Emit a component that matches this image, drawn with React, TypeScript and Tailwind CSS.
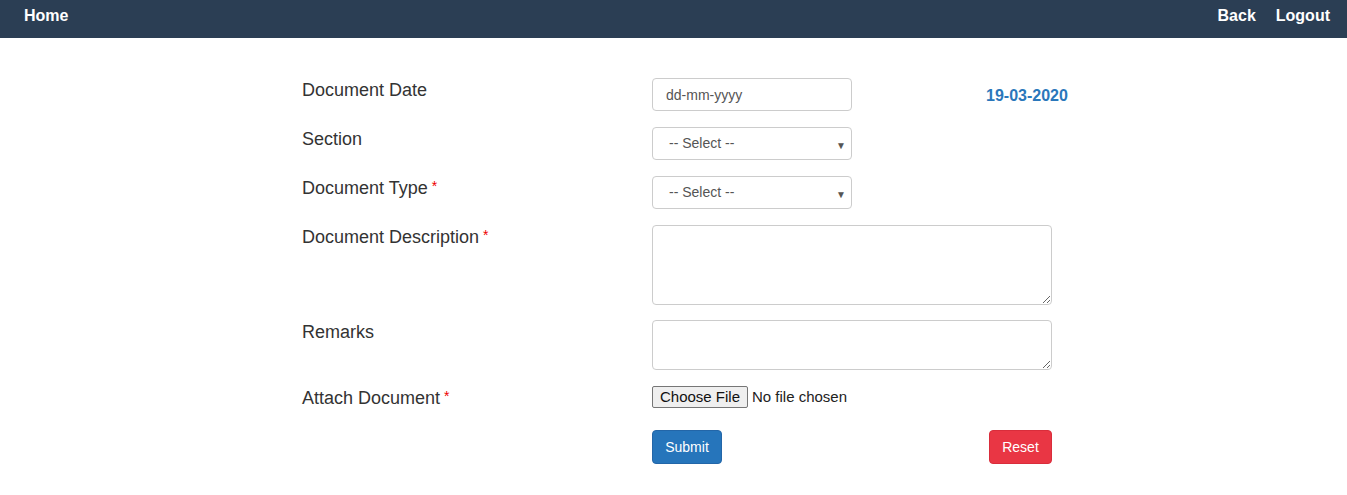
import React from "react";

const font = { fontFamily: '"Liberation Sans", Arial, sans-serif' };

function Label({ text, req }: { text: string; req?: boolean }) {
  return (
    <div className="w-[350px] shrink-0 text-[18px] leading-[20px] text-[#333] pt-[2px]">
      {text}
      {req && <span className="text-[#e00] text-[14px] align-top ml-[4px] relative top-[-2px]">*</span>}
    </div>
  );
}

function Select() {
  return (
    <div className="relative w-[200px] h-[33px] border border-[#ccc] rounded-[4px] bg-white flex items-center pl-[16px] text-[14px] text-[#555]">
      -- Select --
      <span className="absolute right-[5px] top-[10px] text-[10px] text-[#555]">▼</span>
    </div>
  );
}

export default function App() {
  return (
    <div className="min-h-[495px] bg-white" style={font}>
      <div className="h-[38px] bg-[#2b3e54] flex items-start justify-between px-[24px] pt-[7px] text-white font-bold text-[16px] leading-[18px]">
        <span>Home</span>
        <div className="flex gap-[20px] mr-[-7px]">
          <span>Back</span>
          <span>Logout</span>
        </div>
      </div>
      <div className="ml-[302px] pt-[40px] flex flex-col">
        <div className="flex items-start h-[32px]">
          <Label text="Document Date" />
          <input
            className="w-[200px] h-[33px] border border-[#ccc] rounded-[4px] px-[13px] text-[14px] text-[#555] placeholder:text-[#555] outline-none"
            placeholder="dd-mm-yyyy"
          />
          <div className="ml-[134px] pt-[6px] text-[16px] font-bold text-[#2a77bb]">19-03-2020</div>
        </div>
        <div className="flex items-start mt-[17px]">
          <Label text="Section" />
          <Select />
        </div>
        <div className="flex items-start mt-[16px]">
          <Label text="Document Type" req />
          <Select />
        </div>
        <div className="flex items-start mt-[16px]">
          <Label text="Document Description" req />
          <textarea className="w-[400px] h-[80px] border border-[#ccc] rounded-[4px] block" />
        </div>
        <div className="flex items-start mt-[15px]">
          <Label text="Remarks" />
          <textarea className="w-[400px] h-[50px] border border-[#ccc] rounded-[4px] block" />
        </div>
        <div className="flex items-start mt-[16px]">
          <Label text="Attach Document" req />
          <div className="flex items-center text-[15px] text-[#222]">
            <span className="h-[22px] w-[96px] flex items-center justify-center border border-[#767676] rounded-[2px] bg-[#efefef] text-[#111]">Choose File</span>
            <span className="ml-[4px]">No file chosen</span>
          </div>
        </div>
        <div className="flex items-start mt-[21px]">
          <div className="w-[350px] shrink-0" />
          <div className="w-[400px] flex justify-between">
            <button className="w-[70px] h-[34px] pt-[1px] rounded-[4px] bg-[#2675bb] border border-[#2366a8] text-white text-[14px]">Submit</button>
            <button className="w-[63px] h-[34px] pt-[1px] rounded-[4px] bg-[#e93644] border border-[#d92d3b] text-white text-[14px]">Reset</button>
          </div>
        </div>
      </div>
    </div>
  );
}
